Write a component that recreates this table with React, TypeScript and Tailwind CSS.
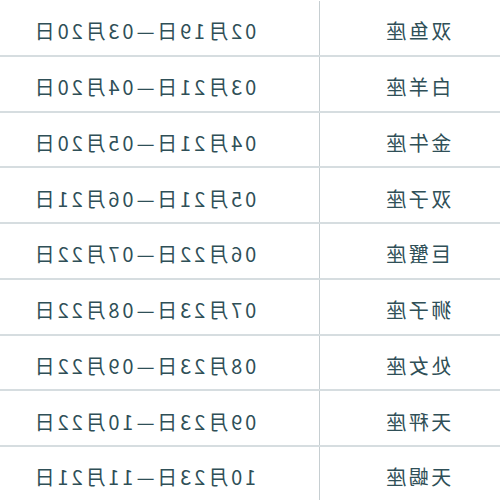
import React from 'react';

const rows: [string, string][] = [
  ['双鱼座', '02月19日—03月20日'],
  ['白羊座', '03月21日—04月20日'],
  ['金牛座', '04月21日—05月20日'],
  ['双子座', '05月21日—06月21日'],
  ['巨蟹座', '06月22日—07月22日'],
  ['狮子座', '07月23日—08月22日'],
  ['处女座', '08月23日—09月22日'],
  ['天秤座', '09月23日—10月22日'],
  ['天蝎座', '10月23日—11月21日'],
];

export default function App() {
  return (
    <div className="w-[500px] h-[500px] overflow-hidden bg-white">
      {/* the screenshot is a mirror image of the table */}
      <div className="-scale-x-100 w-[500px] h-[500px] pt-[1px]">
        <div
          className="ml-[-21px] w-[552px] text-[#2f4f57]"
          style={{ fontFamily: '"Noto Sans CJK SC", "Noto Sans", sans-serif' }}
        >
          {rows.map(([sign, range]) => (
            <div key={sign} className="flex h-[55.75px] border-b-2 border-[#d6dde0]">
              <div className="w-[202px] flex items-center justify-center pt-[7px] pl-[6px] text-[20px] tracking-[2.5px] border-r border-[#c6ced1]">
                {sign}
              </div>
              <div className="flex-1 flex items-center justify-center pt-[7px] text-[20px] tracking-[2.9px]">
                {range}
              </div>
            </div>
          ))}
        </div>
      </div>
    </div>
  );
}
